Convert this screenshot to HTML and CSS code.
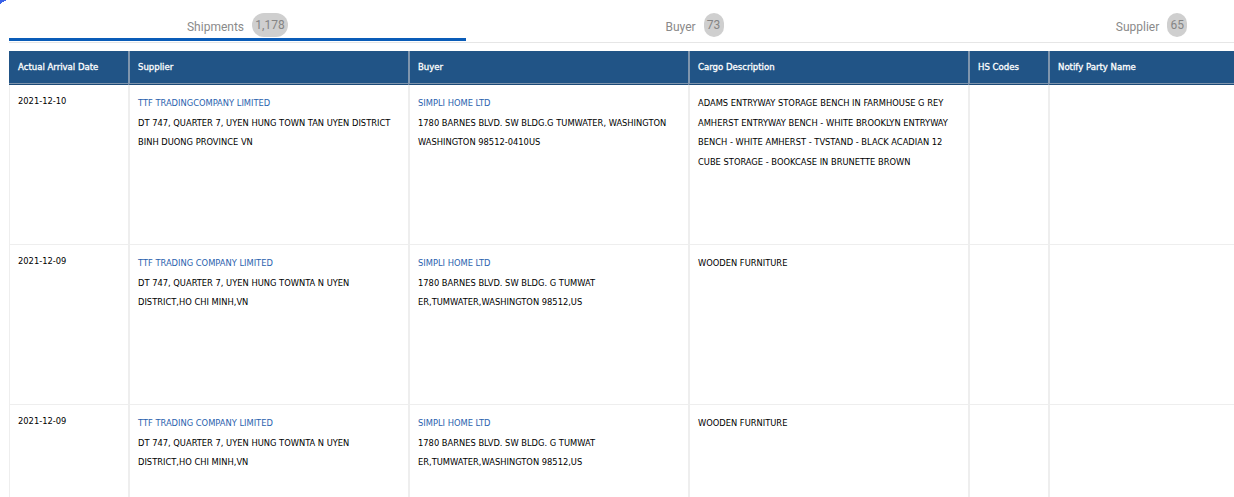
FILE: index.html
```html
<!DOCTYPE html>
<html lang="en">
<head>
<meta charset="utf-8">
<title>Shipments</title>
<link rel="stylesheet" href="styles.css">
</head>
<body>
<svg class="corner" width="6" height="4" viewBox="0 0 6 4"><path d="M0 0H6V1H4V2H2V3H1V4H0Z" fill="#3b62e8"/></svg>
<nav class="tabs">
  <a class="tab active"><span class="tab-label">Shipments</span><span class="badge wide">1,178</span></a>
  <a class="tab"><span class="tab-label">Buyer</span><span class="badge">73</span></a>
  <a class="tab"><span class="tab-label">Supplier</span><span class="badge">65</span></a>
</nav>
<table class="grid">
  <colgroup>
    <col class="c-date"><col class="c-wide"><col class="c-wide"><col class="c-wide"><col class="c-hs"><col>
  </colgroup>
  <thead>
    <tr><th>Actual Arrival Date</th><th>Supplier</th><th>Buyer</th><th>Cargo Description</th><th>HS Codes</th><th>Notify Party Name</th></tr>
  </thead>
  <tbody>
    <tr>
      <td class="date">2021-12-10</td>
      <td><a class="link">TTF TRADINGCOMPANY LIMITED</a><p>DT 747, QUARTER 7, UYEN HUNG TOWN TAN UYEN DISTRICT<br>BINH DUONG PROVINCE VN</p></td>
      <td><a class="link">SIMPLI HOME LTD</a><p>1780 BARNES BLVD. SW BLDG.G TUMWATER, WASHINGTON<br>WASHINGTON 98512-0410US</p></td>
      <td><p>ADAMS ENTRYWAY STORAGE BENCH IN FARMHOUSE G REY<br>AMHERST ENTRYWAY BENCH - WHITE BROOKLYN ENTRYWAY<br>BENCH - WHITE AMHERST - TVSTAND - BLACK ACADIAN 12<br>CUBE STORAGE - BOOKCASE IN BRUNETTE BROWN</p></td>
      <td></td><td></td>
    </tr>
    <tr>
      <td class="date">2021-12-09</td>
      <td><a class="link">TTF TRADING COMPANY LIMITED</a><p>DT 747, QUARTER 7, UYEN HUNG TOWNTA N UYEN<br>DISTRICT,HO CHI MINH,VN</p></td>
      <td><a class="link">SIMPLI HOME LTD</a><p>1780 BARNES BLVD. SW BLDG. G TUMWAT<br>ER,TUMWATER,WASHINGTON 98512,US</p></td>
      <td><p>WOODEN FURNITURE</p></td>
      <td></td><td></td>
    </tr>
    <tr class="cut">
      <td class="date">2021-12-09</td>
      <td><a class="link">TTF TRADING COMPANY LIMITED</a><p>DT 747, QUARTER 7, UYEN HUNG TOWNTA N UYEN<br>DISTRICT,HO CHI MINH,VN</p></td>
      <td><a class="link">SIMPLI HOME LTD</a><p>1780 BARNES BLVD. SW BLDG. G TUMWAT<br>ER,TUMWATER,WASHINGTON 98512,US</p></td>
      <td><p>WOODEN FURNITURE</p></td>
      <td></td><td></td>
    </tr>
  </tbody>
</table>
</body>
</html>
```
FILE: styles.css
```css
html, body { margin: 0; padding: 0; background: #fff; height: 497px; overflow: hidden; }
body { padding: 0 0 0 9px; font-family: "DejaVu Sans Condensed", "DejaVu Sans", sans-serif; font-stretch: condensed; }
.corner { position: absolute; left: 0; top: 0; }
.tabs { display: grid; grid-template-columns: repeat(3, 457px); width: 1225px; overflow: hidden; height: 43px; box-sizing: border-box; border-bottom: 1px solid #e6e6e6; }
.tab { display: flex; justify-content: center; align-items: flex-start; gap: 8px; height: 41px; box-sizing: border-box; padding-top: 13px; font-family: Roboto, sans-serif; font-stretch: normal; font-size: 12px; color: #8a8a8a; }
.tab.active { border-bottom: 3px solid #0a5cb8; }
.tab-label { line-height: 24px; padding-top: 2px; }
.badge { background: #cfcfcf; color: #858585; border-radius: 12px; height: 24px; line-height: 24px; width: 20px; text-align: center; font-size: 12px; }
.badge.wide { width: 36px; }
.grid { border-collapse: separate; border-spacing: 0; table-layout: fixed; width: 1225px; margin-top: 8px; font-size: 9.25px; }
.c-date { width: 119px; }
.c-wide { width: 280px; }
.c-hs { width: 80px; }
th { background: #215486; color: #fff; height: 34px; padding: 0 0 3px 8px; text-align: left; font-weight: 400; font-size: 9.5px; -webkit-text-stroke: 0.3px #fff; border-left: 2px solid #7f95ad; border-bottom: 1px solid #1c4a78; box-shadow: inset 0 -1px 0 #7f95ad; box-sizing: border-box; }
th:first-child { border-left: 0; padding-left: 9px; }
td { height: 160px; vertical-align: top; padding: 8px 8px 0 8px; box-sizing: border-box; border-left: 2px solid #eeeeee; border-bottom: 1px solid #eeeeee; color: #000; line-height: 19.5px; }
td:first-child { border-left: 1px solid #eeeeee; padding-left: 8px; }
td.date { padding-top: 6px; }
.cut td { height: 92px; border-bottom: 0; }
.link { display: block; color: #2a62ae; }
p { margin: 0; }
```
